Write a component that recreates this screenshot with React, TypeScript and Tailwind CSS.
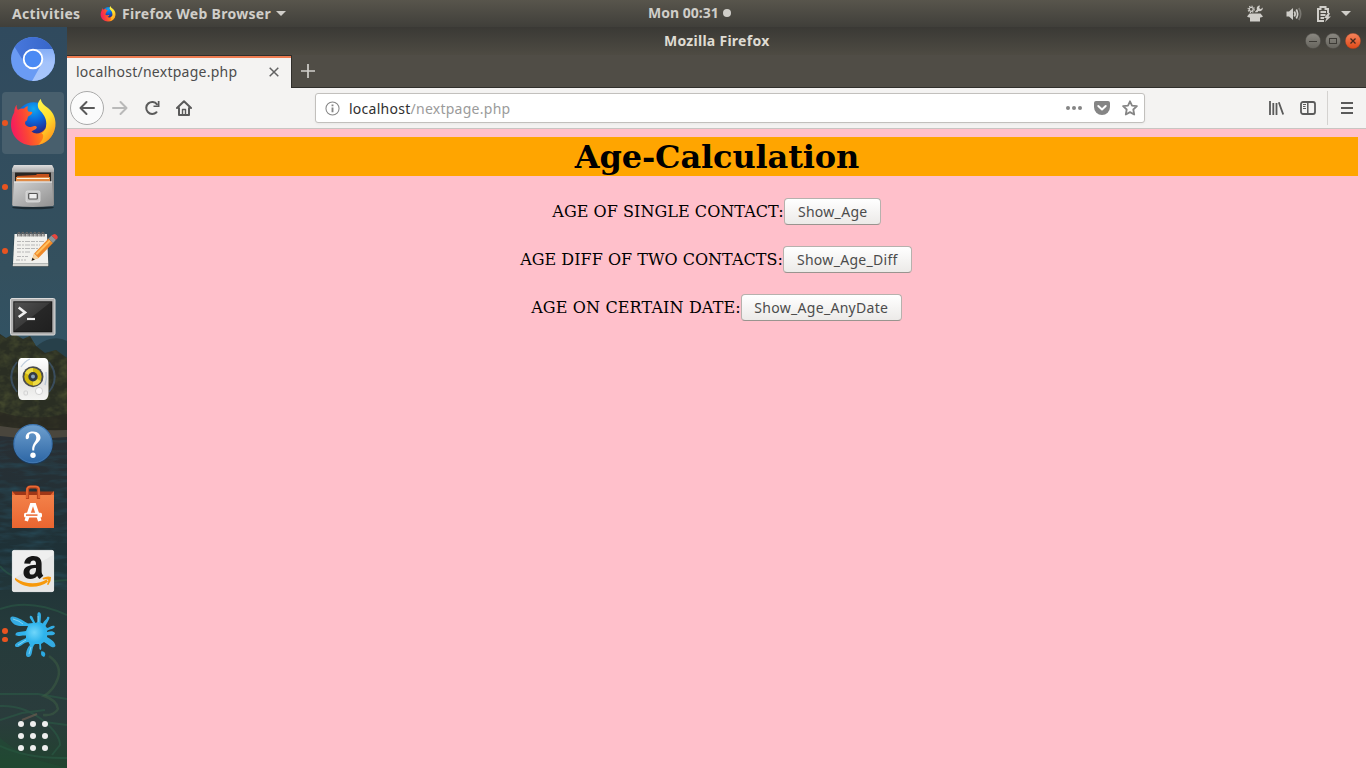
import React from "react";

type IconProps = { children: React.ReactNode };

function Art({ children }: IconProps) {
  return (
    <svg viewBox="0 0 48 48" className="h-12 w-12 overflow-visible" aria-hidden="true">
      {children}
    </svg>
  );
}

function ChromiumIcon() {
  return (
    <Art>
      <defs>
        <clipPath id="chromiumDisc"><circle cx="24" cy="24" r="22" /></clipPath>
        <linearGradient id="chTop" x1="0" x2="1"><stop offset="0" stopColor="#4a7ade" /><stop offset="1" stopColor="#3564c8" /></linearGradient>
        <linearGradient id="chRight" x1="0" x2="0" y1="0" y2="1"><stop offset="0" stopColor="#86aef6" /><stop offset="0.4" stopColor="#a4c3fb" /><stop offset="1" stopColor="#a9c6fb" /></linearGradient>
      </defs>
      <g clipPath="url(#chromiumDisc)">
        <rect width="48" height="48" fill="#6a9bf4" />
        <path d="M24 14H48V48H22L32 30Z" fill="url(#chRight)" />
        <path d="M0 0H48V14H24L15.5 28 5 11Z" fill="url(#chTop)" />
      </g>
      <circle cx="24" cy="24" r="9.3" fill="#4a8af4" stroke="#fff" strokeWidth="1.9" />
    </Art>
  );
}

function FirefoxArt() {
  return (
    <>
      <defs>
        <radialGradient id="ffGlobe" cx="0.5" cy="0.2" r="0.85"><stop offset="0" stopColor="#10a8f0" /><stop offset="0.4" stopColor="#0a6ade" /><stop offset="0.75" stopColor="#20349c" /><stop offset="1" stopColor="#2c1f6c" /></radialGradient>
        <linearGradient id="ffBody" x1="0.05" y1="0.6" x2="1" y2="0.4"><stop offset="0" stopColor="#f51e5c" /><stop offset="0.3" stopColor="#fb4536" /><stop offset="0.65" stopColor="#ff7f18" /><stop offset="1" stopColor="#ffb81a" /></linearGradient>
        <linearGradient id="ffFlame" x1="0.3" y1="0" x2="0.7" y2="1"><stop offset="0" stopColor="#fff24a" /><stop offset="0.45" stopColor="#ffe02e" /><stop offset="1" stopColor="#ff8a18" /></linearGradient>
      </defs>
      <circle cx="24.5" cy="20" r="16.8" fill="url(#ffGlobe)" />
      <path d="M7.7 5.8C7.5 8 7.8 9.5 9 11 10.7 9.8 12.8 9.4 15 9.6 16 8.3 17.5 7.5 19 7.2 18.2 9.4 18.4 11.2 19.4 12.4L23.2 12.9C23.6 14.4 22 15.7 19.4 17.2 18.4 18.4 18.6 20 18 21.5 16.2 21.8 15.6 23.6 16.4 25.6 18.5 29 22.5 27.8 24.4 27.2 26.5 26.7 28 27.4 27.8 28.8 27 31 24.5 31 22.5 32.5 26 35.6 32.5 35 36 30L45 32C42 41.5 33.5 46.5 24 46.5 11.5 46.5 2 37.5 2 25.5 2 20 3.5 16.8 5.2 13.5 5.3 10.3 6.2 7.7 7.7 5.8Z" fill="url(#ffBody)" />
      <path d="M31.7 0C28.3 3.5 28 7.5 30.4 10.8 33.8 14.5 37.3 18.5 37.3 24.5 37.2 29.5 35.5 32.5 32.5 34.5 36 35 34 42 29 46 40.5 43 47 33.5 46.5 24 46.3 18 43.5 12.5 39 9 35 6.3 32.5 4 31.7 0Z" fill="url(#ffFlame)" />
    </>
  );
}

function FilesIcon() {
  return (
    <Art>
      <defs>
        <linearGradient id="fileTop" x1="0" x2="0" y1="0" y2="1"><stop offset="0" stopColor="#dedede" /><stop offset="1" stopColor="#a9a9a9" /></linearGradient>
        <linearGradient id="fileFront" x1="0" x2="1" y1="0" y2="1"><stop offset="0" stopColor="#d2d2d2" /><stop offset="1" stopColor="#8f8f8f" /></linearGradient>
      </defs>
      <ellipse cx="24" cy="44.5" rx="21" ry="1.8" fill="#000" opacity="0.45" />
      <path d="M5 2H43L45 6V42H3V6Z" fill="#8c8c8c" />
      <path d="M5 2H43L45 6V9H3V6Z" fill="url(#fileTop)" />
      <rect x="6" y="9.5" width="36" height="10" fill="#292522" />
      <path d="M8 13 27 12 28 11H40V20H8Z" fill="#c4511c" />
      <path d="M7 14H41V19H7Z" fill="#e08a45" /><path d="M8 15H40V16H8Z" fill="#fff3df" />
      <path d="M5 18.5H43L44.5 43Q24 45 3.5 43Z" fill="url(#fileFront)" />
      <path d="M5 19H43" stroke="#ededed" strokeWidth="1" />
      <rect x="17" y="28" width="14" height="11" rx="1.5" fill="#c9c9c9" stroke="#e6e6e6" strokeWidth="0.7" />
      <rect x="19.7" y="30.5" width="8.6" height="5.5" rx="0.8" fill="#eee" stroke="#555" strokeWidth="1.2" />
    </Art>
  );
}

function EditorIcon() {
  return (
    <Art>
      <path d="M5 7.5H38.5L40 40H3.5Z" fill="#20292c" opacity="0.5" />
      <path d="M5.5 7H38L39.3 36.5H4Z" fill="#f1f1ed" />
      <path d="M4 36.5H39.3V39.2H3.7Z" fill="#d7d7d2" />
      {[9, 13, 17, 21, 25, 29, 33].map((x) => (
        <path key={x} d={`M${x} 9.5C${x - 1.5} 4 ${x + 3} 4 ${x + 2} 9.5`} fill="none" stroke="#666" strokeWidth="1.3" />
      ))}
      <path d="M8 14.5H35M8 18H31M8 21.5H29M8 25H21M8 29.5H19M7 33H17" stroke="#aaa" strokeWidth="0.8" strokeDasharray="4 1 2 1 5 1" />
      <path d="M22.7 33.5 25.2 26.5 39.5 11.5 44 16 29.5 31Z" fill="#ef8928" />
      <path d="M26.5 26.5 40.3 12.7 41.7 14.2 28 28Z" fill="#ffc05e" />
      <path d="M22.7 33.5 25.2 26.5 29.5 31Z" fill="#f5d3a0" /><path d="M22.5 33.7 23.5 30.7 25.8 32.7Z" fill="#222" />
      <path d="M39.5 11.5 42.5 8.5 47 12.7 44 16Z" fill="#8b9499" />
      <path d="M42.5 8.5Q46 5.5 48 8.5 50 11 47 12.7Z" fill="#e8463e" />
    </Art>
  );
}

function TerminalIcon() {
  return (
    <Art>
      <defs><linearGradient id="termBg" x1="0" y1="0" x2="1" y2="1"><stop stopColor="#525252" /><stop offset="0.48" stopColor="#3b3b3b" /><stop offset="0.5" stopColor="#272727" /><stop offset="1" stopColor="#202020" /></linearGradient></defs>
      <rect x="1.5" y="7.5" width="44.5" height="36.5" rx="1.5" fill="#b0b0b0" stroke="#dadada" strokeWidth="1" />
      <rect x="4.3" y="10.3" width="39" height="31" fill="#171717" />
      <rect x="5.3" y="11.3" width="37" height="29" fill="url(#termBg)" />
      <path d="M9.7 16.5 16 21.5 9.7 26" fill="none" stroke="#eee" strokeWidth="2.6" />
      <path d="M18 28H26" stroke="#eee" strokeWidth="2.2" />
    </Art>
  );
}

function SpeakerIcon() {
  return (
    <Art>
      <defs><linearGradient id="spk" x1="0" x2="0" y1="0" y2="1"><stop stopColor="#fff" /><stop offset="0.6" stopColor="#e4e4e2" /><stop offset="1" stopColor="#f5f5f4" /></linearGradient></defs>
      <path d="M8 7Q-3 22 8 37M5 11Q-1 22 5 33M40 7Q51 22 40 37M43 11Q49 22 43 33" fill="none" stroke="#46658c" strokeWidth="1.6" opacity="0.55" />
      <path d="M12 3H36Q39.5 4 39.5 9V39Q39 44.5 35 45H13Q9.3 44.5 9 39V9Q9 4 12 3Z" fill="url(#spk)" />
      <path d="M12 12Q16 6 21 4M36 30Q38 24 37 17" fill="none" stroke="#9ab0cc" strokeWidth="1.3" opacity="0.6" />
      <circle cx="24" cy="21.7" r="10.5" fill="#4c4d4d" /><circle cx="24" cy="21.7" r="8.7" fill="#d3b80c" />
      <path d="M24 22 16 18A9 9 0 0 1 24 13ZM24 22 32 26A9 9 0 0 1 24 30.5Z" fill="#eedb43" />
      <circle cx="24" cy="21.7" r="4.7" fill="#333943" /><circle cx="24" cy="21.5" r="2" fill="#89a3bf" />
      <circle cx="30" cy="36" r="3.6" fill="#f9f9f9" stroke="#c4c4c4" strokeWidth="0.7" />
      <rect x="15" y="36" width="3.5" height="4" rx="1" fill="none" stroke="#d1d1d1" />
    </Art>
  );
}

function HelpIcon() {
  return (
    <Art>
      <defs><linearGradient id="helpBg" x1="0" x2="0" y1="0" y2="1"><stop stopColor="#6e9fce" /><stop offset="1" stopColor="#2d66a5" /></linearGradient></defs>
      <circle cx="24" cy="25.5" r="19.8" fill="#183b60" />
      <circle cx="24" cy="24.7" r="19" fill="url(#helpBg)" stroke="#3f76b0" strokeWidth="1.2" />
      <path d="M16.8 19.5C16 14.5 20 12.3 24 12.5 29 12.7 31.7 15.5 31.5 19 31.2 23.5 25 24.2 25.2 31.5H23.3C22.5 24.5 27.5 23 27.3 18.5 27.2 15.8 25.8 14.2 23.2 14.2 21 14.2 19.7 15.5 20.1 17 20.7 19.7 17.7 21.3 16.8 19.5Z" fill="#fff" />
      <circle cx="24" cy="36.2" r="2.7" fill="#fff" />
    </Art>
  );
}

function SoftwareIcon() {
  return (
    <Art>
      <defs><linearGradient id="bag" x1="0" x2="0" y1="0" y2="1"><stop stopColor="#f38149" /><stop offset="1" stopColor="#e96530" /></linearGradient></defs>
      <path d="M3 8.5H45L42 12.5H6Z" fill="#9f3617" /><path d="M3 8 7 12.5H3ZM45 8 41 12.5H45Z" fill="#e66530" />
      <rect x="3" y="12" width="42" height="33" fill="url(#bag)" />
      <path d="M18.5 16V7Q18.5 4 21.5 4H26.5Q29.5 4 29.5 7V16" fill="none" stroke="#bd461e" strokeWidth="3.2" />
      <path d="M18 15V7Q18 3.6 21.5 3.6H26.5Q30 3.6 30 7V15" fill="none" stroke="#e96a35" strokeWidth="1.5" />
      <path d="M17.2 38 22.6 21.8H25.4L30.8 38" fill="none" stroke="#fff" strokeWidth="3.6" />
      <rect x="15" y="29.7" width="18" height="4.8" rx="1.6" fill="#fff" />
      <path d="M17 32.1H28.5" stroke="#eb6b34" strokeWidth="1.5" />
    </Art>
  );
}

function AmazonIcon() {
  return (
    <Art>
      <rect x="3.4" y="3.4" width="41.2" height="41.2" rx="1.5" fill="#efefef" stroke="#fff" strokeWidth="0.8" />
      <path d="M4 32 44 8V44H4Z" fill="#dedede" opacity="0.55" />
      <path d="M15.2 16.5C16 11 20 9 24.5 9 30 9 32.6 11.8 32.6 16.8V24C32.6 26.5 33.3 27.5 34.3 28.8L30.6 32C29.3 31 28.6 30 28.2 29 26.3 31.2 24 32 21.4 32 17.2 32 14.5 29.6 14.5 25.6 14.5 20 19 18 27 17.7V17C27 14.9 26.3 13.6 24.4 13.6 22.6 13.6 21.6 14.7 21.3 16.8ZM27 21C22.6 21 20.5 22.2 20.5 25 20.5 26.6 21.3 27.6 22.8 27.6 26 27.6 27.2 25 27 21Z" fill="#171717" />
      <path d="M6 30.8C16 38 30 37.7 37.5 32.6L39 34.7C29 42.3 14 41.3 6 32.8Z" fill="#f7990c" />
      <path d="M33.5 31Q38.5 28.6 42 30 42.5 34 39.3 38L38 37.5Q39.7 34 39.2 32.7 37.5 32 34 32.6Z" fill="#f7990c" />
    </Art>
  );
}

function SplatIcon() {
  return (
    <Art>
      <defs><radialGradient id="splatFill" cx="0.53" cy="0.45" r="0.55"><stop stopColor="#6fd6fa" /><stop offset="0.4" stopColor="#2fb4ec" /><stop offset="1" stopColor="#35a8de" /></radialGradient></defs>
      <path d="M19 15C15 14.5 11 16 5.5 13.5 0 9.5 .5 5.3 3.8 5.6 11 7 14 10 19 12.5L24 12C22 8 20 7 21 5 24 4 24 9 26.5 12L28.5 11C29.5 6 27.5 4 29 1.5 33 0 32 6 31.5 11.5L34 12.5C35 9 38 9 38.2 6 43 5 39 10 36.5 15L38 17C41 17 42 14 45.5 15 47 18 40 18 38 20V21C42 20 44 20 46 22 46 25 41 24 38 24.5V26C41 28 46 30 46.5 35 44 39 39 33 35 31L32 33C32 35 33 38 31.5 39 29.5 38 31 36 30 33H26C22 36 24.5 45 20 46 15 47 17 38 21 34L19.5 31C15 31 11 37 7 36 3 33 11 30 17 27V24.5C13 24 8 26 6.5 24 6 20 13 21 17 20Z" fill="url(#splatFill)" />
      <path d="M32.5 40C37 41 37 44 35 46 32 45 31.5 43 32.5 40Z" fill="#2baae2" />
      <path d="M4 8Q11 10 14 13M29 5V11M9 34 17 29M20 43 22 36" stroke="#a2e2f6" strokeWidth="1" opacity="0.7" fill="none" />
    </Art>
  );
}

function Wallpaper() {
  return (
    <svg className="absolute inset-0 h-full w-full" viewBox="0 27 67 741" preserveAspectRatio="none" aria-hidden="true">
      <defs>
        <linearGradient id="sky" x1="0" x2="0" y1="0" y2="1"><stop stopColor="#304a5e" /><stop offset="0.7" stopColor="#34505e" /><stop offset="1" stopColor="#315365" /></linearGradient>
        <linearGradient id="water" x1="0" x2="0" y1="0" y2="1"><stop stopColor="#292f34" /><stop offset="0.35" stopColor="#1e3137" /><stop offset="0.6" stopColor="#263b3b" /><stop offset="0.85" stopColor="#2a3c3c" /><stop offset="1" stopColor="#21432f" /></linearGradient>
        <filter id="foliage" x="0" y="0" width="100%" height="100%" colorInterpolationFilters="sRGB"><feTurbulence type="fractalNoise" baseFrequency="0.1 0.13" numOctaves="3" seed="4" /><feColorMatrix values="0 0 0 0 .27  0 0 0 0 .29  0 0 0 0 .18  2 0 0 0 -.8" /></filter>
        <filter id="ripples" x="0" y="0" width="100%" height="100%" colorInterpolationFilters="sRGB"><feTurbulence type="fractalNoise" baseFrequency="0.04 0.16" numOctaves="3" seed="9" /><feColorMatrix values="0 0 0 0 .15  0 0 0 0 .28  0 0 0 0 .33  2 0 0 0 -.85" /></filter>
        <clipPath id="treeLine"><path d="M0 334 6 338 14 334 23 339 30 336 36 346 45 353 56 350 67 358V432H0Z" /></clipPath>
      </defs>
      <rect y="27" width="67" height="741" fill="#2b3030" />
      <rect y="27" width="67" height="345" fill="url(#sky)" />
      <path d="M34 348Q44 340 50 339 60 337 67 341V362H34Z" fill="#27404a" />
      <g clipPath="url(#treeLine)">
        <rect y="330" width="67" height="102" fill="#2a2e23" />
        <rect y="330" width="67" height="98" filter="url(#foliage)" />
        <path d="M0 412Q30 422 67 414V432H0Z" fill="#292821" opacity="0.7" />
      </g>
      <path d="M0 426Q30 431 67 430V439Q30 442 0 438Z" fill="#4a463d" />
      <path d="M0 436Q30 440 67 437V768H0Z" fill="url(#water)" />
      <rect y="440" width="67" height="150" filter="url(#ripples)" />
      <path d="M0 566Q15 586 67 580M0 609Q30 598 67 615M0 694H38L67 699M0 706Q25 705 45 722L67 725M0 720 22 713 45 710M45 722Q60 735 60 745L52 755M0 746Q28 759 67 758" fill="none" stroke="#2c5f48" strokeWidth="2" opacity="0.5" />
      <path d="M49 656Q62 665 58 678 54 690 44 696 57 700 58 709 54 716 43 715" fill="none" stroke="#3d6044" strokeWidth="2.5" opacity="0.5" />
      <path d="M22 720 37 714" stroke="#756052" strokeWidth="2" opacity="0.6" />
      <path d="M0 738Q12 748 30 758L67 768H0Z" fill="#205236" opacity="0.35" />
    </svg>
  );
}

const launchers: { name: string; icon: React.ReactNode; dots: number }[] = [
  { name: "Chromium", icon: <ChromiumIcon />, dots: 0 },
  { name: "Firefox", icon: <Art><FirefoxArt /></Art>, dots: 1 },
  { name: "Files", icon: <FilesIcon />, dots: 1 },
  { name: "Text Editor", icon: <EditorIcon />, dots: 1 },
  { name: "Terminal", icon: <TerminalIcon />, dots: 0 },
  { name: "Rhythmbox", icon: <SpeakerIcon />, dots: 0 },
  { name: "Help", icon: <HelpIcon />, dots: 0 },
  { name: "Software", icon: <SoftwareIcon />, dots: 0 },
  { name: "Amazon", icon: <AmazonIcon />, dots: 0 },
  { name: "Splat", icon: <SplatIcon />, dots: 2 },
];

function Dock() {
  return (
    <aside className="relative w-[67px] shrink-0 overflow-hidden">
      <Wallpaper />
      <div className="relative flex h-full w-[66px] flex-col">
        {launchers.map((l) => (
          <div key={l.name} className="relative flex h-16 shrink-0 items-center justify-center" aria-label={l.name}>
            {l.name === "Firefox" && <div className="absolute inset-x-0.5 inset-y-px rounded bg-[#485f6d]" />}
            <div className="relative">{l.icon}</div>
            <div className="absolute inset-y-0 left-0.5 flex flex-col items-center justify-center gap-[3px]">
              {l.dots > 0 && <i className="size-[5.5px] rounded-full bg-[#e95420]" />}
              {l.dots > 1 && <i className="size-[5.5px] rounded-full bg-[#e95420]" />}
            </div>
          </div>
        ))}
        <div className="mt-auto mb-[17px] grid grid-cols-[6px_6px_6px] justify-center gap-1.5">
          {Array.from({ length: 9 }, (_, i) => <i key={i} className="size-1.5 rounded-full bg-[#eee]" />)}
        </div>
      </div>
    </aside>
  );
}

function TopBar() {
  return (
    <header className="grid h-[27px] shrink-0 grid-cols-[1fr_auto_1fr] items-center bg-linear-to-b from-[#58554c] to-[#403f3a] text-[14px] font-bold text-[#d0cec9]">
      <div className="flex items-center pl-3">
        <span className="w-[68px] whitespace-nowrap tracking-[0.35px]">Activities</span>
        <svg viewBox="0 0 48 48" className="ml-5 h-4 w-4" aria-hidden="true"><FirefoxArt /></svg>
        <span className="ml-1.5 w-[149px] whitespace-nowrap tracking-[0.3px]">Firefox Web Browser</span>
        <svg viewBox="0 0 10 5" className="ml-[5px] h-[5px] w-2.5"><path d="M0 0H10L5 5Z" fill="#d0cec9" /></svg>
      </div>
      <div className="flex items-center pl-[13px]">
        <span className="w-[71px] pb-0.5 whitespace-nowrap">Mon 00:31</span>
        <i className="mb-px ml-1 size-2 rounded-full bg-[#d0cec9]" />
      </div>
      <div className="flex items-center justify-end pr-[15px]">
        <svg viewBox="0 0 16 17" className="h-[17px] w-4" fill="#d0cec9">
          <circle cx="4.2" cy="4.3" r="2" fill="none" stroke="#d0cec9" strokeWidth="1.2" />
          <circle cx="4.2" cy="4.3" r="3.1" fill="none" stroke="#d0cec9" strokeWidth="1.2" strokeDasharray="1.2 1.23" />
          <path d="M13 0.5C10 0.5 9.3 3 10 4.6L7.6 7.3H10.4L11.5 6C14 6.6 16.2 5 15.7 2.6L13.7 4.3 12.2 3ZM2.5 8.5H13.5L16 11.5 14 12.5H13V16.5H3V12.5H2L0 11.5Z" />
        </svg>
        <svg viewBox="0 0 16 14" className="ml-[23px] h-3.5 w-4" fill="none" stroke="#d0cec9" strokeWidth="1.7">
          <path d="M.5 4.5H3L7 1V13L3 9.5H.5Z" fill="#d0cec9" stroke="none" /><path d="M8.3 4.5Q10 7 8.3 9.5M10.3 2.5Q13 7 10.3 11.5" /><path d="M12.8 1Q16.5 7 12.8 13" opacity="0.35" />
        </svg>
        <svg viewBox="0 0 14 16" className="ml-[15px] h-4 w-3.5" fill="none" stroke="#d0cec9" strokeWidth="2">
          <path d="M11 7V3H8.5V1H3.5V3H1V15H7M3.5 6H9M3.5 9H8.5M3.5 12H7" /><path d="M11.5 6.5 7 12H9.5L8 16 14 10.5H11.5L13 7.5Z" fill="#d0cec9" stroke="none" />
        </svg>
        <svg viewBox="0 0 10 5" className="ml-2.5 h-[5px] w-2.5"><path d="M0 0H10L5 5Z" fill="#d0cec9" /></svg>
      </div>
    </header>
  );
}

function WindowButtons() {
  return (
    <div className="flex gap-1 justify-self-end pr-[5px]">
      <svg viewBox="0 0 16 16" className="size-4"><defs><linearGradient id="btnBg" x1="0" x2="0" y1="0" y2="1"><stop stopColor="#8b8982" /><stop offset="1" stopColor="#65635c" /></linearGradient></defs><circle cx="8" cy="8" r="7.7" fill="url(#btnBg)" stroke="#42413c" strokeWidth="0.5" /><path d="M4 8.5H12" stroke="#3d3b36" strokeWidth="1" /></svg>
      <svg viewBox="0 0 16 16" className="size-4"><circle cx="8" cy="8" r="7.7" fill="url(#btnBg)" stroke="#42413c" strokeWidth="0.5" /><rect x="4.5" y="5.5" width="7" height="5" fill="none" stroke="#3d3b36" strokeWidth="1" /></svg>
      <svg viewBox="0 0 16 16" className="size-4"><defs><linearGradient id="closeBg" x1="0" x2="0" y1="0" y2="1"><stop stopColor="#f5845c" /><stop offset="1" stopColor="#df4918" /></linearGradient></defs><circle cx="8" cy="8" r="7.7" fill="url(#closeBg)" stroke="#8c371b" strokeWidth="0.3" /><path d="M5.5 5.5 10.5 10.5M10.5 5.5 5.5 10.5" stroke="#45281d" strokeWidth="1.3" /></svg>
    </div>
  );
}

function TitleBar() {
  return (
    <div className="grid h-7 shrink-0 grid-cols-[1fr_auto_1fr] items-center bg-linear-to-b from-[#3a3935] to-[#4e4b43]">
      <span />
      <span className="w-[105px] pb-0.5 text-[14px] font-bold tracking-[0.27px] whitespace-nowrap text-[#dfdbd2]">Mozilla Firefox</span>
      <WindowButtons />
    </div>
  );
}

function TabStrip() {
  return (
    <div className="flex h-[33px] shrink-0 bg-[#504d46]">
      <div className="flex w-[225px] items-center border-t border-r border-[#302f2b] bg-[#f4f3f2] shadow-[inset_0_2px_0_#ee7c51]">
        <span className="ml-[9px] w-[161px] pb-0.5 text-[14px] tracking-[0.26px] whitespace-nowrap text-[#4c4c4c]">localhost/nextpage.php</span>
        <svg viewBox="0 0 10 10" className="ml-[32px] size-2.5"><path d="M.7.7 9.3 9.3M9.3.7.7 9.3" stroke="#626262" strokeWidth="1.5" /></svg>
      </div>
      <div className="flex flex-1 items-center border-b border-[#302f2b] pl-[9px]">
        <svg viewBox="0 0 14 14" className="size-3.5"><path d="M7 0V14M0 7H14" stroke="#d1cfcb" strokeWidth="1.7" /></svg>
      </div>
    </div>
  );
}

function Toolbar() {
  return (
    <div className="flex h-[41px] shrink-0 items-center border-b border-[#c8c5c2] bg-[#f4f3f2] pl-[3px]">
      <div className="flex size-[34px] items-center justify-center rounded-full border border-[#aaa] bg-[#fbfbfb]">
        <svg viewBox="0 0 16 16" className="size-4" fill="none" stroke="#5a5a5a" strokeWidth="2" strokeLinecap="round" strokeLinejoin="round"><path d="M7.5 2 1.5 8 7.5 14M2 8H15" /></svg>
      </div>
      <svg viewBox="0 0 16 16" className="ml-2 size-4" fill="none" stroke="#b9b9b9" strokeWidth="2" strokeLinecap="round" strokeLinejoin="round"><path d="M8.5 2 14.5 8 8.5 14M14 8H1" /></svg>
      <svg viewBox="0 0 16 16" className="ml-4 size-4" fill="none" stroke="#5a5a5a" strokeWidth="2"><path d="M12.5 12.2A6 6 0 1 1 13 4.3" strokeLinecap="round" /><path d="M15.5 1V7H9.5V5.5H13.8V1Z" fill="#5a5a5a" stroke="none" /></svg>
      <svg viewBox="0 0 16 16" className="ml-4 size-4" fill="none" stroke="#5a5a5a" strokeWidth="2" strokeLinejoin="round" strokeLinecap="round"><path d="M1 8 8 1.2 15 8M3 8V15H13V8" /><path d="M6.5 15V9.5H9.5V15" strokeWidth="1.4" /></svg>
      <div className="ml-[123px] flex h-[30px] w-[830px] items-center rounded-[3px] border border-[#c2c0bd] bg-white pl-[9px] shadow-[0_1px_3px_#0000000d]">
        <svg viewBox="0 0 16 16" className="h-[15px] w-[15px]" fill="none" stroke="#858585" strokeWidth="1.1"><circle cx="8" cy="8" r="7" /><path d="M8 7V12M8 3.8V5.7" strokeWidth="2" /></svg>
        <span className="ml-[9px] w-[161px] text-[14px] tracking-[0.26px] whitespace-nowrap text-[#303030]">localhost<span className="text-[#9b9b9b]">/nextpage.php</span></span>
        <div className="ml-auto flex items-center gap-3 pr-1.5">
          <svg viewBox="0 0 16 16" className="size-4" fill="#858585"><circle cx="2" cy="8" r="2" /><circle cx="8" cy="8" r="2" /><circle cx="14" cy="8" r="2" /></svg>
          <svg viewBox="0 0 16 16" className="size-4"><path d="M2 1H14Q16 1 16 3V7A8 8 0 0 1 0 7V3Q0 1 2 1Z" fill="#858585" /><path d="M4.3 6 8 9.5 11.7 6" fill="none" stroke="#fff" strokeWidth="2" strokeLinecap="round" strokeLinejoin="round" /></svg>
          <svg viewBox="0 0 16 16" className="size-4"><path d="M8 1.3 10 5.6 14.9 6.2 11.3 9.5 12.2 14.5 8 12.1 3.8 14.5 4.7 9.5 1.1 6.2 6 5.6Z" fill="none" stroke="#858585" strokeWidth="1.8" strokeLinejoin="round" /></svg>
        </div>
      </div>
      <svg viewBox="0 0 16 16" className="ml-[123px] size-4" fill="none" stroke="#5a5a5a" strokeWidth="1.8"><path d="M2 1V15M5.3 3V15M8.5 3V15M10.8 2.2 15.2 14.5" /></svg>
      <svg viewBox="0 0 16 16" className="ml-4 size-4" fill="none" stroke="#5a5a5a" strokeWidth="1.8"><rect x="1" y="2" width="14" height="12" rx="2" /><path d="M7.8 2V14" strokeWidth="1.5" /><path d="M3 4.5H6M3 6.5H5.5M3 8.5H6" strokeWidth="1" /></svg>
      <div className="ml-[11px] h-[34px] w-px bg-[#d4d2d0]" />
      <svg viewBox="0 0 12 12" className="ml-[13px] size-3"><path d="M0 1H12M0 6H12M0 11H12" stroke="#5a5a5a" strokeWidth="2" /></svg>
    </div>
  );
}

const buttonClass = "flex h-[27px] items-center justify-center rounded-[4px] border border-[#b6b1ad] border-b-[#99948f] bg-linear-to-b from-white to-[#eceae8] font-['Noto_Sans',sans-serif] text-[14px] tracking-[0.3px] whitespace-nowrap text-[#4c4c4c]";

function Page() {
  return (
    <main className="flex flex-1 flex-col bg-[#ffc0cb] p-2 font-['DejaVu_Serif',serif] text-[16px] text-black">
      <h1 className="h-[39px] bg-[#ffa500] pt-px pl-px text-center text-[32px] leading-[39px] font-bold tracking-[-0.13px]">Age-Calculation</h1>
      <div className="mt-[22px] flex h-[27px] items-center justify-center">
        <span className="tracking-[0.05px]">AGE OF SINGLE CONTACT:</span>
        <button className={`${buttonClass} w-[97px] pl-px`}>Show_Age</button>
      </div>
      <div className="mt-[21px] flex h-[27px] items-center justify-center pr-px">
        <span className="tracking-[0.02px]">AGE DIFF OF TWO CONTACTS:</span>
        <button className={`${buttonClass} w-[129px]`}>Show_Age_Diff</button>
      </div>
      <div className="mt-[21px] flex h-[27px] items-center justify-center">
        <span className="tracking-[0.13px]">AGE ON CERTAIN DATE:</span>
        <button className={`${buttonClass} w-[161px]`}>Show_Age_AnyDate</button>
      </div>
    </main>
  );
}

export default function App() {
  return (
    <div className="flex h-[768px] w-[1366px] flex-col overflow-hidden font-['Noto_Sans',sans-serif]">
      <TopBar />
      <div className="flex min-h-0 flex-1">
        <Dock />
        <div className="flex min-w-0 flex-1 flex-col">
          <TitleBar />
          <TabStrip />
          <Toolbar />
          <Page />
        </div>
      </div>
    </div>
  );
}
